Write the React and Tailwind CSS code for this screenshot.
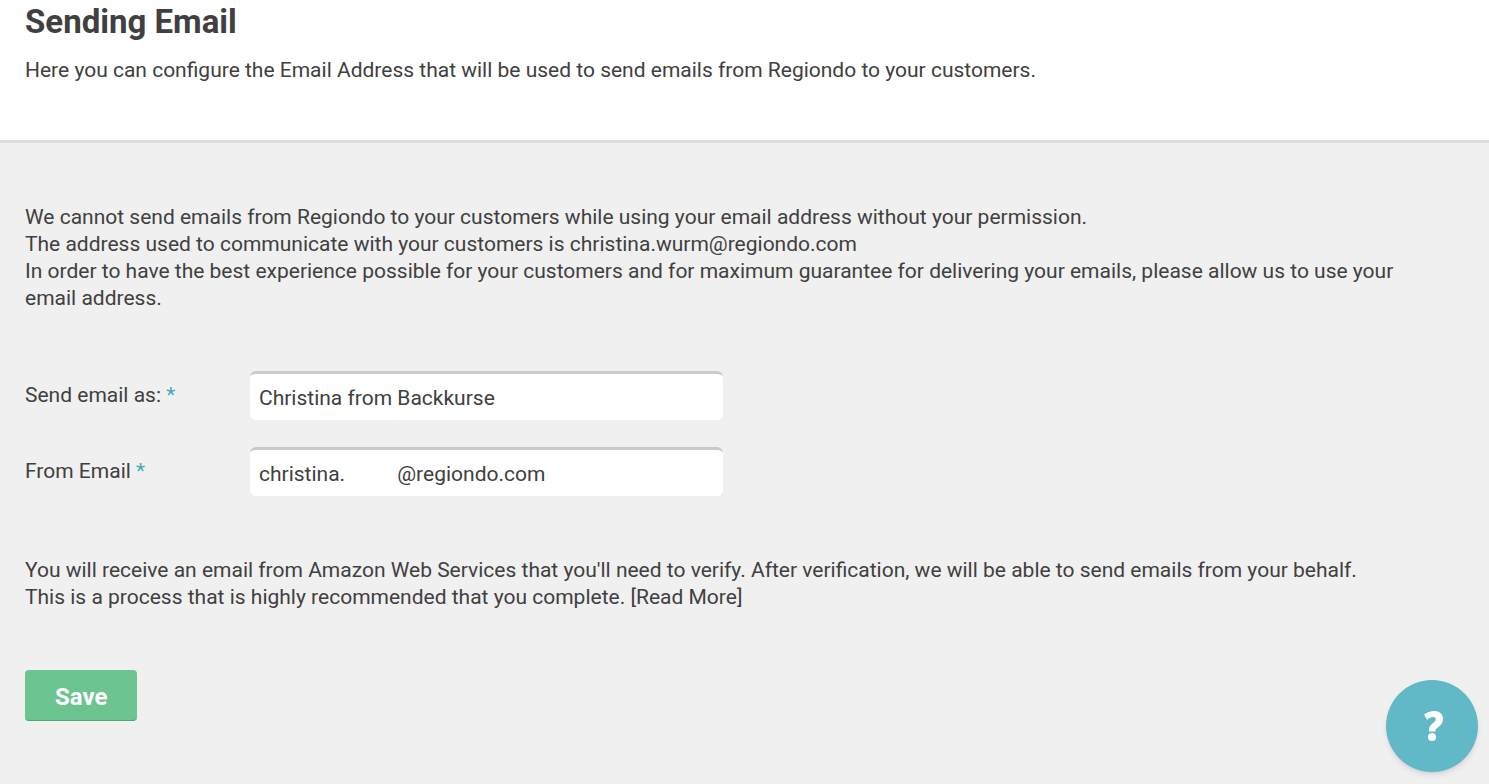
import { useState } from 'react'

function Field({ id, label, type = 'text', value, onChange }) {
  return (
    <div className="flex items-center">
      <label htmlFor={id} className="w-[225px] shrink-0">
        {label} <span className="text-[#45a9bd]">*</span>
      </label>
      <input
        id={id}
        type={type}
        value={value}
        onChange={e => onChange(e.target.value)}
        className="h-[49px] w-full max-w-[473px] rounded-md border-t-3 border-[#cacaca] bg-white px-[9px] pt-[2px] focus:outline-none" />
    </div>
  )
}

export default function App() {
  const [sender, setSender] = useState('Christina from Backkurse')
  const [from,   setFrom]   = useState('christina.          @regiondo.com')

  return (
    <div className="flex min-h-screen flex-col bg-[#f0f0f0] font-['Roboto',sans-serif] text-[21px] leading-[27px] text-[#404040]">
      <header className="border-b-3 border-[#dddddd] bg-white px-[25px] pb-14">
        <h1 className="text-[33px] font-bold leading-[44px]">Sending Email</h1>
        <p className="mt-[13px]">
          Here you can configure the Email Address that will be used to send emails from Regiondo to your customers.
        </p>
      </header>

      <main className="pt-[61px] pr-[50px] pl-[25px]">
        <p>We cannot send emails from Regiondo to your customers while using your email address without your permission.</p>
        <p>The address used to communicate with your customers is christina.wurm@regiondo.com</p>
        <p>
          In order to have the best experience possible for your customers and for maximum guarantee for delivering your
          emails, please allow us to use your email address.
        </p>

        <form onSubmit={e => e.preventDefault()}>
          <div className="mt-[59px] space-y-[27px]">
            <Field id="sender" label="Send email as:" value={sender} onChange={setSender} />
            <Field id="from" label="From Email" value={from} onChange={setFrom} />
          </div>

          <div className="mt-[61px]">
            <p>
              You will receive an email from Amazon Web Services that you'll need to verify. After verification, we will be
              able to send emails from your behalf.
            </p>
            <p>
              This is a process that is highly recommended that you complete. <a href="#more">[Read More]</a>
            </p>
          </div>

          <button
            type="submit"
            className="mt-[59px] h-[51px] rounded-sm border-b border-[#4fa672] bg-[#6cc590] px-[30px] pt-1 text-[24px] font-bold text-white">
            Save
          </button>
        </form>
      </main>

      <button
        type="button"
        aria-label="Help"
        className="fixed right-[11px] bottom-3 flex size-[92px] items-center justify-center rounded-full bg-[#61b8c6] shadow-md">
        <svg viewBox="-2 0 20 30" className="h-[30px] w-5 overflow-visible" fill="#fff" aria-hidden="true">
          <path d="M0 3.8C3 1.3 6.5 0 10.3 0C15.6 0 19 3 19 8C19 11.6 17.3 13.8 14.5 16C12.2 17.8 11.4 18.5 11.4 20.5H5V19C5 16 6 14.4 8.5 12.4C10.6 10.8 11.7 9.9 11.7 8.2C11.7 6.7 10.6 6 9 6C7 6 5.2 7 3.2 8.7Z" />
          <circle cx="8" cy="26" r="4" />
        </svg>
      </button>
    </div>
  )
}
